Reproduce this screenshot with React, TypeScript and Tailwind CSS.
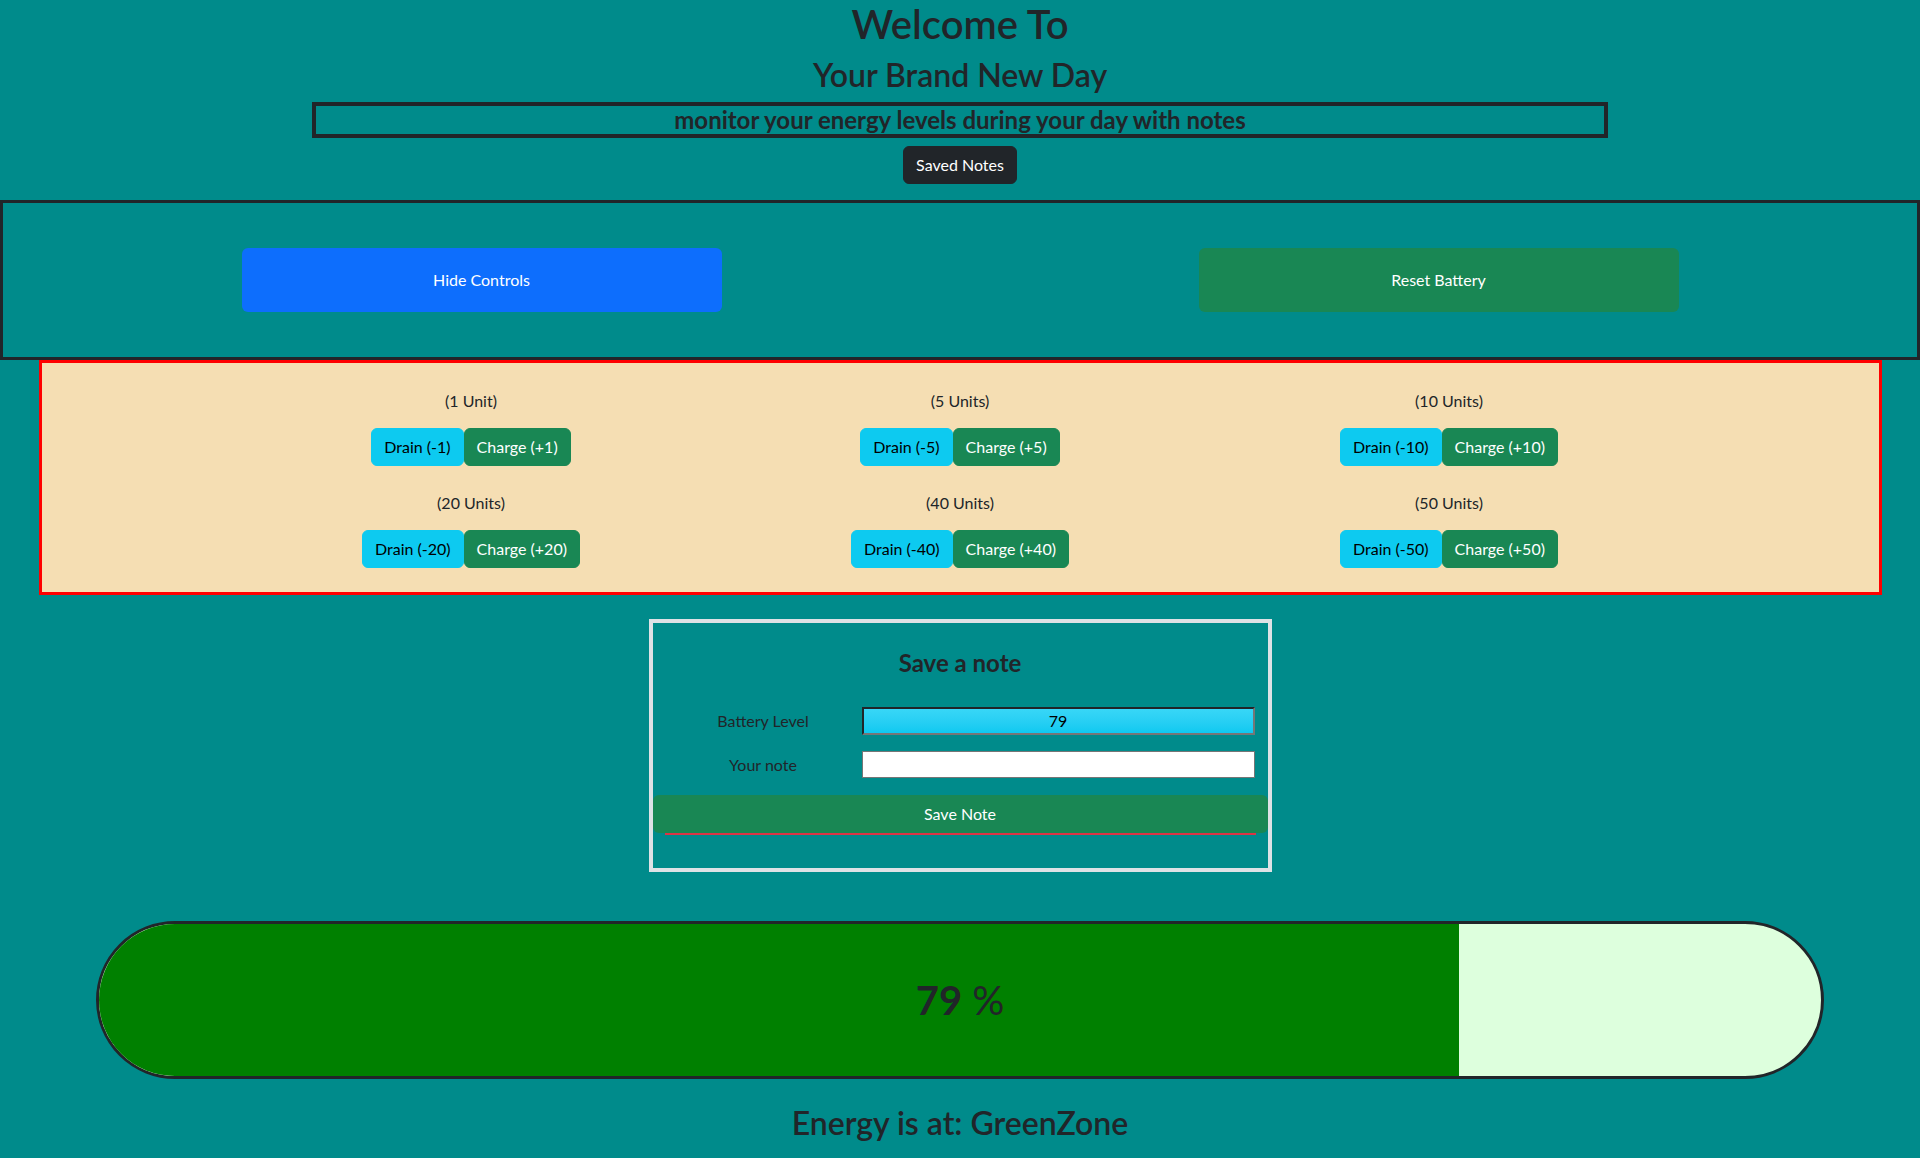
import React from "react";

const units = [
  { label: "(1 Unit)", n: 1 },
  { label: "(5 Units)", n: 5 },
  { label: "(10 Units)", n: 10 },
  { label: "(20 Units)", n: 20 },
  { label: "(40 Units)", n: 40 },
  { label: "(50 Units)", n: 50 },
];

export default function App() {
  const level = 79;
  return (
    <div className="w-[1920px] min-h-[1158px] bg-[#008b8b] font-['Lato',sans-serif] text-[#212529] pb-4">
      <h1 className="m-0 text-center text-[40px] leading-[1.2] font-semibold mb-2">Welcome To</h1>
      <h2 className="m-0 text-center text-[32px] leading-[1.2] font-semibold mb-2">Your Brand New Day</h2>
      <h4 className="mx-auto w-[1296px] border-4 border-[#212529] text-center text-[24px] leading-[28px] font-bold mb-2">
        monitor your energy levels during your day with notes
      </h4>
      <div className="flex justify-center">
        <button className="bg-[#212529] border border-[#212529] text-white text-base leading-6 px-3 py-1.5 rounded-md">
          Saved Notes
        </button>
      </div>

      <div className="mt-4 w-[1920px] h-[160px] border-[3px] border-[#212529] flex items-center">
        <div className="w-1/2 flex justify-center">
          <button className="w-[480px] h-16 bg-[#0d6efd] text-white text-base rounded-md">Hide Controls</button>
        </div>
        <div className="w-1/2 flex justify-center">
          <button className="w-[480px] h-16 bg-[#198754] text-white text-base rounded-md">Reset Battery</button>
        </div>
      </div>

      <div className="mx-auto w-[1843px] border-[3px] border-[#ff0000] bg-[#f5deb3] pt-[26px] pb-[24px]">
        <div className="mx-auto w-[1467px] grid grid-cols-3 gap-y-[25px]">
          {units.map((u) => (
            <div key={u.n} className="flex flex-col items-center">
              <div className="text-base leading-6 text-[#212529]">{u.label}</div>
              <div className="flex mt-[15px]">
                <button className="bg-[#0dcaf0] border border-[#0dcaf0] text-black text-base leading-6 px-3 py-1.5 rounded-md">
                  Drain (-{u.n})
                </button>
                <button className="bg-[#198754] border border-[#198754] text-white text-base leading-6 px-3 py-1.5 rounded-md">
                  Charge (+{u.n})
                </button>
              </div>
            </div>
          ))}
        </div>
      </div>

      <div className="mx-auto mt-6 w-[623px] border-4 border-[#dee2e6] pt-[25px] pb-[33px]">
        <h4 className="text-center text-[24px] leading-[29px] font-bold">Save a note</h4>
        <div className="px-[12px] mt-[30px] grid grid-cols-[197px_393px] gap-y-4 items-center">
          <div className="text-center text-base text-[#212529]">Battery Level</div>
          <div className="h-[28px] border-2 border-t-[#212529] border-l-[#212529] border-b-[#767676] border-r-[#767676] bg-gradient-to-b from-[#38d6f7] to-[#0dc9f0] flex items-center justify-center text-base text-black">
            {level}
          </div>
          <div className="text-center text-base text-[#212529]">Your note</div>
          <div className="h-[27px] border border-[#767676] bg-white"></div>
        </div>
        <button className="mt-[17px] w-full h-[38px] bg-[#198754] text-white text-base rounded-md">Save Note</button>
        <div className="mx-[12px] h-[2px] bg-[#dc3545]"></div>
      </div>

      <div className="mx-auto mt-[49px] w-[1728px] h-[158px] rounded-full border-[3px] border-[#212529] bg-[#ddffdd] overflow-hidden relative flex">
        <div className="h-full bg-[#008000]" style={{ width: `${level}%` }}></div>
        <div className="absolute inset-0 flex items-center justify-center text-[40px] text-[#212529]">
          <span className="font-bold">{level}</span>
          <span className="ml-[10px]">%</span>
        </div>
      </div>

      <h2 className="mt-[25px] text-center text-[32px] leading-[1.2] font-semibold">Energy is at: GreenZone</h2>
    </div>
  );
}
